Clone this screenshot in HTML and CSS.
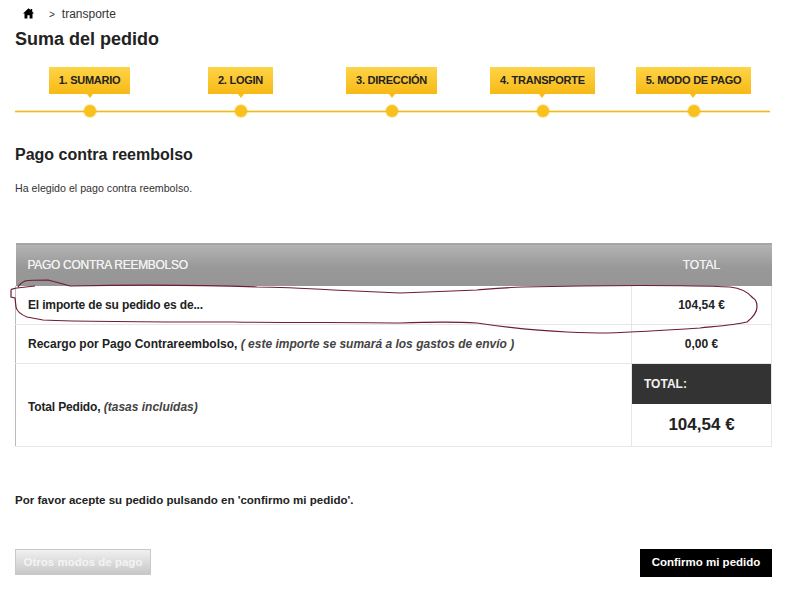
FILE: index.html
```html
<!DOCTYPE html>
<html lang="es">
<head>
<meta charset="utf-8">
<title>Suma del pedido</title>
<link rel="stylesheet" href="styles.css">
</head>
<body>
<div class="page">
  <nav class="crumbs">
    <svg class="home" width="11" height="11" viewBox="0 0 11 11"><path d="M5.5 0.2 L7.6 2.1 L7.6 0.9 L9.2 0.9 L9.2 3.6 L11 5.4 L9.5 5.4 L9.5 10.6 L6.6 10.6 L6.6 7.2 L4.4 7.2 L4.4 10.6 L1.5 10.6 L1.5 5.4 L0 5.4 Z" fill="#000"/></svg>
    <span class="sep">&gt;</span>
    <span>transporte</span>
  </nav>
  <h1>Suma del pedido</h1>
  <ol class="steps">
    <li class="step"><span class="tag">1. SUMARIO</span><span class="dot"></span></li>
    <li class="step"><span class="tag">2. LOGIN</span><span class="dot"></span></li>
    <li class="step"><span class="tag">3. DIRECCIÓN</span><span class="dot"></span></li>
    <li class="step"><span class="tag">4. TRANSPORTE</span><span class="dot"></span></li>
    <li class="step"><span class="tag">5. MODO DE PAGO</span><span class="dot"></span></li>
  </ol>
  <h2>Pago contra reembolso</h2>
  <p class="intro">Ha elegido el pago contra reembolso.</p>
  <table class="summary">
    <thead>
      <tr><th class="label">PAGO CONTRA REEMBOLSO</th><th class="amount">TOTAL</th></tr>
    </thead>
    <tbody>
      <tr class="row"><td class="label tight">El importe de su pedido es de...</td><td class="amount">104,54 €</td></tr>
      <tr class="row"><td class="label">Recargo por Pago Contrareembolso, <em>( este importe se sumará a los gastos de envío )</em></td><td class="amount">0,00 €</td></tr>
      <tr class="final"><td class="label"><span class="tight">Total Pedido,</span> <em>(tasas incluídas)</em></td>
        <td class="grand"><div class="grand-head">TOTAL:</div><div class="grand-value">104,54 €</div></td></tr>
    </tbody>
  </table>
  <p class="confirm">Por favor acepte su pedido pulsando en 'confirmo mi pedido'.</p>
  <div class="actions">
    <a class="btn-other">Otros modos de pago</a>
    <a class="btn-confirm">Confirmo mi pedido</a>
  </div>
</div>
<svg class="scribble" width="790" height="602" viewBox="0 0 790 602"><path d="M35 286 L17 288 C13 289 11 289 11 290 L11 297 L15 298 L16 307 C17 312 22 315 27 317 L43 320 C90 322 180 322 233 322 C300 323 350 322 400 323 C430 322 460 322 477 323 C510 328 540 331 567 332 C590 333 600 333 607 333 C640 332 670 330 700 328 C720 326 735 325 747 322 C752 318 757 313 757 307 C757 302 755 299 753 298 C748 292 740 288 730 287 C690 285 600 285 523 287 C500 288 490 289 477 290 C450 291 430 292 400 293 C380 292 360 291 333 290 C300 288 280 287 257 287 C200 285 120 285 70 286 C60 283 52 281 48 280 C38 280 30 280 25 281 C21 283 19 285 18 287" fill="none" stroke="#6e1c30" stroke-width="1.2"/></svg>
</body>
</html>
```
FILE: styles.css
```css
* { box-sizing: border-box; }
html, body { margin: 0; padding: 0; background: #fff; }
body { font-family: "Liberation Sans", Arial, sans-serif; color: #222; position: relative; height: 602px; overflow: hidden; }
.page { padding: 7px 18px 0 15px; width: 790px; }

.crumbs { display: flex; align-items: center; height: 14px; padding-left: 8px; font-size: 12px; color: #333; }
.home { margin-right: 15px; margin-top: -2px; }
.sep { margin-right: 7px; font-size: 10px; }

h1 { margin: 8px 0 0; font-size: 18px; line-height: 20px; font-weight: bold; color: #222; }

.steps { list-style: none; margin: 18px 0 0; padding: 0; width: 755px; height: 45px; display: grid; grid-template-columns: repeat(5, 151px); border-bottom: 1px solid #efb62a; box-shadow: 0 1px 0 #fdeca8, inset 0 -1px 0 #fdeca8; }
.step { display: flex; flex-direction: column; align-items: center; padding-right: 2px; }
.tag { position: relative; display: block; height: 27px; line-height: 27px; padding: 0 10px; font-size: 11px; letter-spacing: -.25px; font-weight: bold; color: #222; white-space: nowrap; background: linear-gradient(#fed447, #f7b916); }
.tag::after { content: ""; position: absolute; left: 50%; top: 27px; margin-left: -3px; border: 3px solid transparent; border-top: 4px solid #f8bc1c; border-bottom: 0; }
.dot { flex: none; width: 12px; height: 12px; margin-top: 11px; border-radius: 50%; background: #fac11d; box-shadow: 0 0 0 1px rgba(240, 190, 50, .35); }

h2 { margin: 33px 0 0; font-size: 16px; line-height: 20px; font-weight: bold; color: #222; }
.intro { margin: 16px 0 0; font-size: 10.67px; line-height: 14px; color: #333; }

.summary { width: 757px; margin-top: 48px; border-collapse: collapse; table-layout: fixed; font-size: 12px; }
.summary th { height: 42px; font-size: 12px; font-weight: normal; color: #f2f2f2; text-align: left; background: linear-gradient(#b4b4b4, #989898 55%, #959595); border-top: 1px solid #a8a8a8; padding: 0; text-shadow: 0 0 .6px #f2f2f2; }
.summary th.label { padding-left: 12px; letter-spacing: -.3px; }
.summary th.amount { width: 140px; text-align: center; }
.row td { height: 39px; border-bottom: 1px solid #e6e6e6; padding: 0; font-weight: bold; color: #222; }
.row td.label, .final td.label { padding-left: 12px; border-left: 1px solid #bbb; }
.final td.label { padding-top: 4px; }
.summary .tight { letter-spacing: -.16px; }
.summary em { color: #444; }
.row td.amount { text-align: center; border-left: 1px solid #e6e6e6; border-right: 1px solid #e6e6e6; }
.final td { padding: 0; border-bottom: 1px solid #e6e6e6; font-weight: bold; }
.final td.grand { border-left: 1px solid #e6e6e6; border-right: 1px solid #e6e6e6; }
.grand-head { height: 40px; line-height: 40px; padding-left: 12px; background: #333; color: #f2f2f2; font-size: 12px; }
.grand-value { height: 42px; line-height: 42px; text-align: center; font-size: 17px; color: #222; }

.confirm { margin: 46px 0 0; font-size: 11.55px; line-height: 14px; font-weight: bold; color: #222; }
.actions { display: flex; justify-content: space-between; align-items: flex-start; margin-top: 42px; width: 757px; }
.btn-other { display: block; width: 136px; height: 26px; line-height: 24px; text-align: center; font-size: 11.5px; font-weight: bold; color: #f4f4f4; border: 1px solid #c8c8c8; background: linear-gradient(#f0f0f0, #d8d8d8 60%, #c8c8c8); }
.btn-confirm { display: block; width: 132px; height: 28px; line-height: 27px; text-align: center; font-size: 11.5px; font-weight: bold; color: #fff; background: #000; }

.scribble { position: absolute; left: 0; top: 0; pointer-events: none; }
```
